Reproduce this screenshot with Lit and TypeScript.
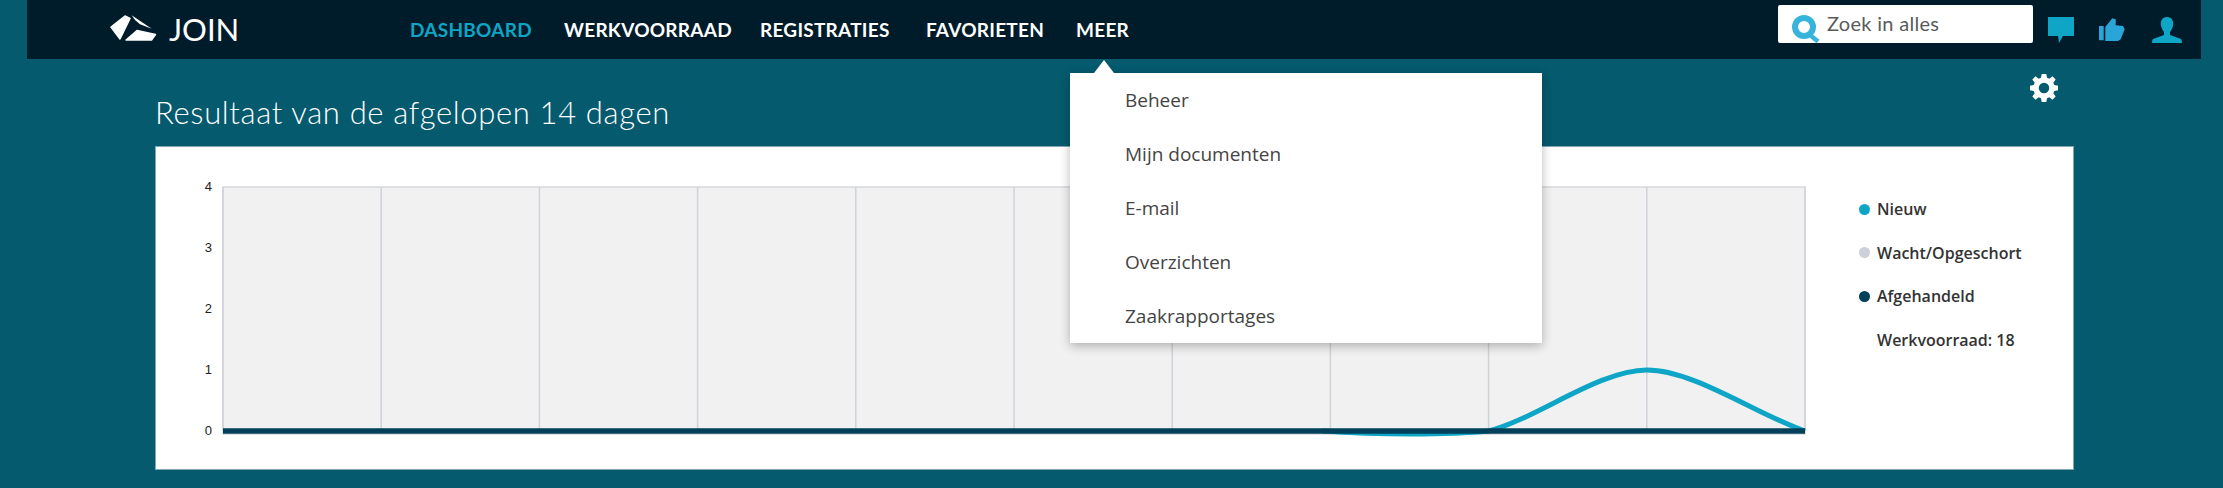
import { LitElement, html, css, svg } from "lit";
import { customElement } from "lit/decorators.js";

const NAV = ["DASHBOARD", "WERKVOORRAAD", "REGISTRATIES", "FAVORIETEN", "MEER"];
const MENU = ["Beheer", "Mijn documenten", "E-mail", "Overzichten", "Zaakrapportages"];
const X0 = 67, Y0 = 40, STEP = 158.2, UNIT = 61;

@customElement("app-root")
export class AppRoot extends LitElement {
  static styles = css`
    :host { display: block; width: 2223px; height: 488px; background: #055a6e; overflow: hidden; position: relative; font-family: "Open Sans", sans-serif; }
    .bar { margin: 0 22px 0 27px; height: 59px; background: #001b29; display: flex; align-items: center; }
    .logo { margin-left: 83px; width: 48px; height: 30px; }
    .brand { margin-left: 11px; font: 400 31px Lato, sans-serif; color: #fff; width: 241px; line-height: 59px; }
    .nav { display: grid; grid-template-columns: 154px 196px 166px 150px auto; font: 700 19px Lato, sans-serif; letter-spacing: .25px; color: #fff; }
    .nav .on { color: #0ea5c6; }
    .right { margin-left: auto; display: flex; align-items: center; height: 100%; padding-right: 19px; }
    .search { width: 255px; height: 38px; margin-top: -11px; box-sizing: border-box; background: #fff; border-radius: 2px; display: flex; align-items: flex-start; font: 400 20px/36px Lato, sans-serif; letter-spacing: .3px; color: #5a5a5a; padding-left: 14px; gap: 7px; }
    .search svg { margin-top: 10px; flex: none; }
    .icons { display: flex; align-items: center; gap: 24px; margin-left: 15px; }
    .icons .user { margin-left: 3px; }
    .head { display: flex; justify-content: space-between; align-items: flex-start; padding: 0 165px 0 155px; height: 87px; }
    h1 { margin: 35px 0 0; font: 300 31px/36px Lato, sans-serif; letter-spacing: .65px; color: #fff; }
    .gear { margin-top: 15px; }
    .card { margin: 0 149px 0 155px; height: 324px; box-sizing: border-box; background: #fff; border: 1px solid #7fa8b4; display: flex; }
    .chart { width: 1703px; height: 322px; flex: none; }
    .legend { font: 600 16px "Open Sans", sans-serif; color: #333; padding-top: 52px; display: flex; flex-direction: column; gap: 23.5px; }
    .legend div { display: flex; align-items: center; height: 20px; }
    .dot { width: 11px; height: 11px; border-radius: 50%; margin-right: 7px; flex: none; }
    .menu { position: absolute; left: 1070px; top: 73px; width: 472px; height: 270px; background: #fff; box-shadow: 0 3px 10px rgba(0,0,0,.28); }
    .menu::before { content: ""; position: absolute; left: 24px; top: -13px; border: 10px solid transparent; border-top: 0; border-bottom: 13px solid #fff; }
    .menu a { display: flex; align-items: center; height: 54px; padding-left: 55px; font-size: 19px; color: #444; }
  `;

  private curve() {
    const x = (i: number) => X0 + STEP * i;
    const b = Y0 + 4 * UNIT;
    const p = Y0 + 3 * UNIT;
    return `M${x(6.95)} ${b} C${x(7.3)} ${b + 4} ${x(7.75)} ${b + 4} ${x(8)} ${b} C${x(8.3)} ${b - 12} ${x(8.7)} ${p} ${x(9)} ${p} C${x(9.3)} ${p} ${x(9.7)} ${b - 16} ${x(10)} ${b}`;
  }

  private chart() {
    const lines = Array.from({ length: 11 }, (_, i) => i);
    return svg`
      <rect x=${X0} y=${Y0} width=${STEP * 10} height=${UNIT * 4 + 3} fill="#f1f1f1" stroke="#d5d8dc" stroke-width="1.5"/>
      ${lines.map((i) => svg`<line x1=${X0 + STEP * i} x2=${X0 + STEP * i} y1=${Y0} y2=${Y0 + UNIT * 4} stroke="#cfd2d8" stroke-width="1.5"/>`)}
      ${[4, 3, 2, 1, 0].map((v) => svg`<text x="56" y=${Y0 + (4 - v) * UNIT + 4} text-anchor="end" font-family="Liberation Sans" font-size="13" fill="#222">${v}</text>`)}
      <path d=${this.curve()} fill="none" stroke="#0ea5c6" stroke-width="5"/>
      <line x1=${X0} x2=${X0 + STEP * 10} y1=${Y0 + UNIT * 4} y2=${Y0 + UNIT * 4} stroke="#00405a" stroke-width="5.5"/>
    `;
  }

  render() {
    return html`
      <div class="bar">
        <svg class="logo" viewBox="0 0 48 30">
          <path fill="#fff" stroke="#fff" stroke-width="1.5" stroke-linejoin="round" d="M1 12 L15 1 L20 3.5 L10 24Z"/>
          <path fill="#fff" d="M21.7 .3 L41.7 13.7 L30 9.3 L25 5Z"/>
          <path fill="#fff" stroke="#fff" stroke-width="1.5" stroke-linejoin="round" d="M27 15.5 L45.5 19.5 L41.5 25 L16 25Z"/>
        </svg>
        <div class="brand">JOIN</div>
        <div class="nav">${NAV.map((n, i) => html`<span class=${i === 0 ? "on" : ""}>${n}</span>`)}</div>
        <div class="right">
          <div class="search">
            <svg width="28" height="30" viewBox="0 0 28 30"><circle cx="12" cy="12" r="9" fill="none" stroke="#37b4dc" stroke-width="6"/><path d="M18 20l8 6.5" stroke="#37b4dc" stroke-width="4.5"/></svg>
            <span>Zoek in alles</span>
          </div>
          <div class="icons">
            <svg width="27" height="26" viewBox="0 0 27 26"><path fill="#0ea5c6" d="M0 0h26v19H15l-4 7-1-7H0z"/></svg>
            <svg width="26" height="23" viewBox="0 0 26 23"><path fill="#2aa5d8" d="M0 8h4.7v14.3H0zM6.3 9l7-8.700 3.400 1v6l7.300.7 1.700 3.300-4 10-2.700 1.700H6.300z"/></svg>
            <svg class="user" width="30" height="26" viewBox="0 0 30 26"><path fill="#0ea5c6" d="M15 0c5 0 7 4 6 9-1 3-2 5-3 6v3l11 4q1 1 1 4H0q0-3 1-4l11-4v-3c-1-1-2-3-3-6-1-5 1-9 6-9z"/></svg>
          </div>
        </div>
      </div>
      <div class="head">
        <h1>Resultaat van de afgelopen 14 dagen</h1>
        <svg class="gear" width="28" height="28" viewBox="0 0 24 24"><path fill="#fff" fill-rule="evenodd" d="M10 0h4l.6 3.200 2 .8L19.300 2 22 4.700 20 7.400l.8 2L24 10v4l-3.200.6-.8 2 2 2.700L19.300 22 16.600 20l-2 .8L14 24h-4l-.6-3.200-2-.8L4.700 22 2 19.300 4 16.600l-.8-2L0 14v-4l3.200-.6.8-2L2 4.700 4.700 2 7.400 4l2-.8zM12 7.500a4.500 4.500 0 1 0 0 9 4.500 4.500 0 0 0 0-9z"/></svg>
      </div>
      <div class="card">
        <svg class="chart" viewBox="0 0 1703 322">${this.chart()}</svg>
        <div class="legend">
          <div><span class="dot" style="background:#0ea5c6"></span>Nieuw</div>
          <div><span class="dot" style="background:#cdd0d8"></span>Wacht/Opgeschort</div>
          <div><span class="dot" style="background:#00405a"></span>Afgehandeld</div>
          <div><span class="dot" style="background:transparent"></span>Werkvoorraad: 18</div>
        </div>
      </div>
      <div class="menu">${MENU.map((m) => html`<a>${m}</a>`)}</div>
    `;
  }
}
